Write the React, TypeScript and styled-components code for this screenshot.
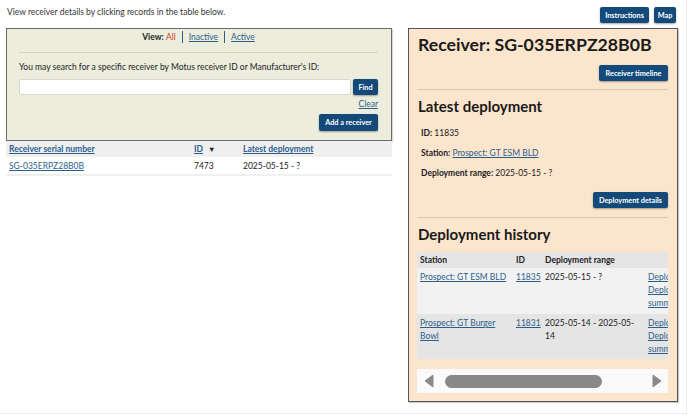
import { createGlobalStyle, styled } from 'styled-components';

const GlobalStyle = createGlobalStyle`
  html, body {
    margin: 0;
    padding: 0;
    background: #fff;
  }
  body {
    font-family: Lato, 'Liberation Sans', sans-serif;
    color: #222;
  }
  * {
    box-sizing: border-box;
  }
`;

const LINK = '#2c5e8c';
const BTN = '#134a7a';
const SMALL = '8.5px';

type Deployment = {
  station: string;
  id: string;
  range: React.ReactNode;
};

const HISTORY: Deployment[] = [
  { station: 'Prospect: GT ESM BLD', id: '11835', range: '2025-05-15 - ?' },
  {
    station: 'Prospect: GT Burger Bowl',
    id: '11831',
    range: (
      <>
        2025-05-14 - 2025-05-
        <br />
        14
      </>
    ),
  },
];

function ArrowLeft() {
  return (
    <svg width="10" height="14" viewBox="0 0 10 14">
      <path d="M9 1 L1 7 L9 13 Z" fill="#8a8a8a" stroke="#8a8a8a" strokeLinejoin="round" />
    </svg>
  );
}

function ArrowRight() {
  return (
    <svg width="10" height="14" viewBox="0 0 10 14">
      <path d="M1 1 L9 7 L1 13 Z" fill="#8a8a8a" stroke="#8a8a8a" strokeLinejoin="round" />
    </svg>
  );
}

export default function App() {
  return (
    <>
      <GlobalStyle />
      <Styled.Page>
        <Styled.TopBar>
          <Styled.Intro>View receiver details by clicking records in the table below.</Styled.Intro>
          <Styled.ButtonGroup>
            <Styled.Button $w={49}>Instructions</Styled.Button>
            <Styled.Button $w={22}>Map</Styled.Button>
          </Styled.ButtonGroup>
        </Styled.TopBar>

        <Styled.Main>
          <Styled.LeftColumn>
            <Styled.SearchPanel>
              <Styled.ViewBar>
                <b>View:</b>&nbsp;<Styled.Current>All</Styled.Current>
                <Styled.Sep />
                <Styled.Link href="#">Inactive</Styled.Link>
                <Styled.Sep />
                <Styled.Link href="#">Active</Styled.Link>
              </Styled.ViewBar>
              <Styled.Divider $color="#d2d2c2" $mt={9} />
              <Styled.Label>
                You may search for a specific receiver by Motus receiver ID or Manufacturer's ID:
              </Styled.Label>
              <Styled.SearchRow>
                <Styled.Input type="text" />
                <Styled.Button $w={25} $h={16}>
                  Find
                </Styled.Button>
              </Styled.SearchRow>
              <Styled.RightLine $mt={4}>
                <Styled.Link href="#">Clear</Styled.Link>
              </Styled.RightLine>
              <Styled.RightLine $mt={5}>
                <Styled.Button $w={59} $h={17}>
                  Add a receiver
                </Styled.Button>
              </Styled.RightLine>
            </Styled.SearchPanel>

            <Styled.ListTable>
              <colgroup>
                <col style={{ width: 185 }} />
                <col style={{ width: 49 }} />
                <col />
              </colgroup>
              <thead>
                <tr>
                  <th>
                    <Styled.Link href="#">Receiver serial number</Styled.Link>
                  </th>
                  <th>
                    <Styled.Link href="#">ID</Styled.Link>
                    <Styled.SortMark>▼</Styled.SortMark>
                  </th>
                  <th>
                    <Styled.Link href="#">Latest deployment</Styled.Link>
                  </th>
                </tr>
              </thead>
              <tbody>
                <tr>
                  <td>
                    <Styled.Link href="#">SG-035ERPZ28B0B</Styled.Link>
                  </td>
                  <td>7473</td>
                  <td>2025-05-15 - ?</td>
                </tr>
              </tbody>
            </Styled.ListTable>
          </Styled.LeftColumn>

          <Styled.DetailPanel>
            <Styled.Title>Receiver: SG-035ERPZ28B0B</Styled.Title>
            <Styled.RightLine $mt={9}>
              <Styled.Button $w={69}>Receiver timeline</Styled.Button>
            </Styled.RightLine>
            <Styled.Divider $color="#dcc6ae" $mt={8} />
            <Styled.Subtitle>Latest deployment</Styled.Subtitle>
            <Styled.Info $mt={12}>
              <b>ID:</b> 11835
            </Styled.Info>
            <Styled.Info $mt={10}>
              <b>Station:</b> <Styled.Link href="#">Prospect: GT ESM BLD</Styled.Link>
            </Styled.Info>
            <Styled.Info $mt={10}>
              <b>Deployment range:</b> 2025-05-15 - ?
            </Styled.Info>
            <Styled.RightLine $mt={14}>
              <Styled.Button $w={75}>Deployment details</Styled.Button>
            </Styled.RightLine>
            <Styled.Divider $color="#dcc6ae" $mt={9} />
            <Styled.Subtitle>Deployment history</Styled.Subtitle>

            <Styled.ScrollClip>
              <Styled.HistoryTable>
                <colgroup>
                  <col style={{ width: 96 }} />
                  <col style={{ width: 29 }} />
                  <col style={{ width: 103 }} />
                  <col style={{ width: 80 }} />
                </colgroup>
                <thead>
                  <tr>
                    <th>Station</th>
                    <th>ID</th>
                    <th>Deployment range</th>
                    <th />
                  </tr>
                </thead>
                <tbody>
                  {HISTORY.map(function (row) {
                    return (
                      <tr key={row.id}>
                        <td>
                          <Styled.Link href="#">{row.station}</Styled.Link>
                        </td>
                        <td>
                          <Styled.Link href="#">{row.id}</Styled.Link>
                        </td>
                        <td>{row.range}</td>
                        <td>
                          <Styled.BlockLink href="#">Deployment details</Styled.BlockLink>
                          <Styled.BlockLink href="#">
                            Deployment
                            <br />
                            summary
                          </Styled.BlockLink>
                        </td>
                      </tr>
                    );
                  })}
                </tbody>
              </Styled.HistoryTable>
            </Styled.ScrollClip>

            <Styled.ScrollBar>
              <ArrowLeft />
              <Styled.Thumb />
              <Styled.Spacer />
              <ArrowRight />
            </Styled.ScrollBar>
          </Styled.DetailPanel>
        </Styled.Main>
      </Styled.Page>
    </>
  );
}

const Styled = {
  Page: styled.div`
    width: 687px;
    height: 414px;
    border-right: 1px solid #ececec;
    border-bottom: 1px solid #ececec;
    display: flex;
    flex-direction: column;
  `,

  TopBar: styled.div`
    height: 28px;
    display: flex;
    justify-content: space-between;
    align-items: flex-start;
    padding: 0 10px 0 7px;
  `,

  Intro: styled.p`
    margin: 7px 0 0;
    font-size: ${SMALL};
    line-height: 10px;
    color: #333;
  `,

  ButtonGroup: styled.div`
    display: flex;
    gap: 5px;
    margin-top: 7px;
  `,

  Button: styled.button<{ $w: number; $h?: number }>`
    width: ${(p) => p.$w}px;
    height: ${(p) => p.$h ?? 16}px;
    padding: 0;
    border: none;
    border-radius: 2px;
    background: ${BTN};
    color: #fff;
    font-family: inherit;
    font-size: 7.3px;
    font-weight: 700;
    white-space: nowrap;
    box-shadow: 0 1px 2px rgba(0, 0, 0, 0.35);
    display: inline-flex;
    align-items: center;
    justify-content: center;
    cursor: pointer;
  `,

  Main: styled.div`
    display: flex;
    align-items: flex-start;
    gap: 16px;
    padding-left: 6px;
  `,

  LeftColumn: styled.div`
    width: 386px;
  `,

  SearchPanel: styled.div`
    background: #ededdd;
    border: 1px solid #6a6a6a;
    box-shadow: 1px 1px 1px rgba(0, 0, 0, 0.15);
    padding: 2px 13px 9px 12px;
    font-size: ${SMALL};
  `,

  ViewBar: styled.div`
    display: flex;
    justify-content: center;
    align-items: center;
    line-height: 12px;
    height: 12px;
  `,

  Current: styled.span`
    color: #d2401c;
  `,

  Sep: styled.span`
    display: inline-block;
    width: 0;
    height: 12px;
    border-left: 1.5px solid ${LINK};
    margin: 0 6px;
  `,

  Link: styled.a`
    color: ${LINK};
    text-decoration: underline;
  `,

  BlockLink: styled.a`
    display: block;
    color: ${LINK};
    text-decoration: underline;
    white-space: nowrap;
  `,

  Divider: styled.div<{ $color: string; $mt: number }>`
    height: 1px;
    background: ${(p) => p.$color};
    margin-top: ${(p) => p.$mt}px;
  `,

  Label: styled.div`
    margin-top: 9px;
    line-height: 10px;
  `,

  SearchRow: styled.div`
    display: flex;
    gap: 2px;
    margin-top: 7px;
    height: 16px;
  `,

  Input: styled.input`
    flex: 1;
    height: 16px;
    border: 1px solid #d8d8d0;
    border-radius: 2px;
    background: #fff;
    padding: 0 3px;
    outline: none;
  `,

  RightLine: styled.div<{ $mt: number }>`
    display: flex;
    justify-content: flex-end;
    line-height: 10px;
    margin-top: ${(p) => p.$mt}px;
  `,

  ListTable: styled.table`
    width: 386px;
    border-collapse: collapse;
    table-layout: fixed;
    font-size: ${SMALL};

    th {
      height: 16px;
      background: #efefef;
      text-align: left;
      font-weight: 700;
      padding: 0 3px;
    }

    td {
      height: 18px;
      padding: 0 3px;
      border-bottom: 2px solid #f0f0f0;
    }
  `,

  SortMark: styled.span`
    margin-left: 5px;
    font-size: 7.5px;
  `,

  DetailPanel: styled.div`
    width: 270px;
    height: 374px;
    background: #fce5cd;
    border: 1px solid #555;
    box-shadow: 1px 1px 1px rgba(0, 0, 0, 0.2);
    padding: 0 9px 8px 8px;
    display: flex;
    flex-direction: column;
  `,

  Title: styled.h2`
    margin: 5px 0 0 1px;
    font-size: 17.7px;
    line-height: 22px;
    font-weight: 700;
    color: #1a1a1a;
  `,

  Subtitle: styled.h3`
    margin: 6px 0 0 1px;
    font-size: 15px;
    line-height: 20px;
    font-weight: 700;
    color: #1a1a1a;
  `,

  Info: styled.div<{ $mt: number }>`
    margin-top: ${(p) => p.$mt}px;
    padding-left: 4px;
    font-size: ${SMALL};
    line-height: 10px;
  `,

  ScrollClip: styled.div`
    margin-top: 8px;
    width: 251px;
    overflow: hidden;
  `,

  HistoryTable: styled.table`
    width: 308px;
    border-collapse: collapse;
    table-layout: fixed;
    font-size: ${SMALL};

    th {
      height: 16px;
      background: #e5e5e5;
      text-align: left;
      font-weight: 700;
      padding: 0 3px;
    }

    td {
      vertical-align: top;
      padding: 3px 3px 4px;
      line-height: 13px;
    }

    tbody tr:nth-child(odd) td {
      background: #f2f2f2;
    }

    tbody tr:nth-child(even) td {
      background: #e5e5e5;
    }
  `,

  ScrollBar: styled.div`
    margin-top: 10px;
    width: 251px;
    height: 24px;
    background: #fafafa;
    display: flex;
    align-items: center;
    padding: 0 6px 0 7px;
  `,

  Thumb: styled.div`
    width: 157px;
    height: 13px;
    margin-left: 11px;
    border-radius: 7px;
    background: #888;
  `,

  Spacer: styled.div`
    flex: 1;
  `,
};
